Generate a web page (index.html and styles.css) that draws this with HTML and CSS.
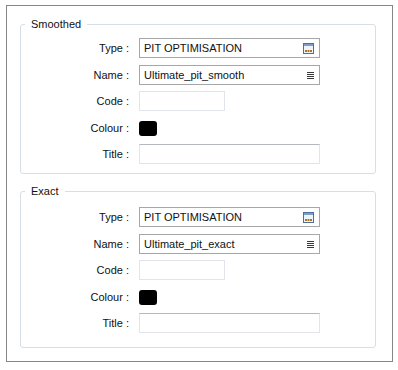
FILE: index.html
```html
<!DOCTYPE html>
<html lang="en">
  <head>
    <meta charset="UTF-8" />
    <title>Pit Outlines</title>
    <link rel="stylesheet" href="styles.css">
  </head>
  <body>
    <div class="panel">
      <div class="group group-first">
        <span class="group-title">Smoothed</span>
        <div class="form-grid">
          <label class="field-label">Type :</label>
          <div class="field field-wide field-dark">
            <span class="field-text">PIT OPTIMISATION</span>
            <svg class="icon-browse" width="11" height="11" viewBox="0 0 11 11">
              <rect x="0.5" y="0.5" width="10" height="10" fill="#eef4fb" stroke="#4d6f9c" />
              <rect x="1" y="1" width="9" height="2" fill="#7f9ec6" />
              <rect x="2" y="7" width="2" height="2" fill="#b5731d" />
              <rect x="4.5" y="7" width="2" height="2" fill="#b5731d" />
              <rect x="7" y="7" width="2" height="2" fill="#b5731d" />
            </svg>
          </div>

          <label class="field-label">Name :</label>
          <div class="field field-wide field-dark">
            <span class="field-text">Ultimate_pit_smooth</span>
            <svg class="icon-list" width="7" height="7" viewBox="0 0 7 7">
              <rect x="0" y="0" width="7" height="1" fill="#3a3a3a" />
              <rect x="0" y="2" width="7" height="1" fill="#3a3a3a" />
              <rect x="0" y="4" width="7" height="1" fill="#3a3a3a" />
              <rect x="0" y="6" width="7" height="1" fill="#3a3a3a" />
            </svg>
          </div>

          <label class="field-label">Code :</label>
          <div class="field field-short field-light"></div>

          <label class="field-label">Colour :</label>
          <div class="swatch-cell"><span class="swatch"></span></div>

          <label class="field-label">Title :</label>
          <div class="field field-wide field-light field-title"></div>
        </div>
      </div>

      <div class="group group-second">
        <span class="group-title">Exact</span>
        <div class="form-grid">
          <label class="field-label">Type :</label>
          <div class="field field-wide field-dark">
            <span class="field-text">PIT OPTIMISATION</span>
            <svg class="icon-browse" width="11" height="11" viewBox="0 0 11 11">
              <rect x="0.5" y="0.5" width="10" height="10" fill="#eef4fb" stroke="#4d6f9c" />
              <rect x="1" y="1" width="9" height="2" fill="#7f9ec6" />
              <rect x="2" y="7" width="2" height="2" fill="#b5731d" />
              <rect x="4.5" y="7" width="2" height="2" fill="#b5731d" />
              <rect x="7" y="7" width="2" height="2" fill="#b5731d" />
            </svg>
          </div>

          <label class="field-label">Name :</label>
          <div class="field field-wide field-dark">
            <span class="field-text">Ultimate_pit_exact</span>
            <svg class="icon-list" width="7" height="7" viewBox="0 0 7 7">
              <rect x="0" y="0" width="7" height="1" fill="#3a3a3a" />
              <rect x="0" y="2" width="7" height="1" fill="#3a3a3a" />
              <rect x="0" y="4" width="7" height="1" fill="#3a3a3a" />
              <rect x="0" y="6" width="7" height="1" fill="#3a3a3a" />
            </svg>
          </div>

          <label class="field-label">Code :</label>
          <div class="field field-short field-light"></div>

          <label class="field-label">Colour :</label>
          <div class="swatch-cell"><span class="swatch"></span></div>

          <label class="field-label">Title :</label>
          <div class="field field-wide field-light field-title"></div>
        </div>
      </div>
    </div>
  </body>
</html>
```

FILE: styles.css
```css
:root {
  --panel-border: #868686;
  --group-border: #d5dfe5;
  --field-dark: #a7a7a7;
  --field-light: #e1e4ea;
  --text: #111111;
}

* {
  margin: 0;
  padding: 0;
  box-sizing: border-box;
}

body {
  font-family: "Liberation Sans", Arial, sans-serif;
  font-size: 11px;
  color: var(--text);
  background: #ffffff;
}

.panel {
  margin: 5px 0 0 6px;
  width: 387px;
  height: 357px;
  border: 1px solid var(--panel-border);
  padding: 18px 16px 0 13px;
}

.group {
  position: relative;
  border: 1px solid var(--group-border);
  border-radius: 3px;
}

.group-first {
  padding: 13px 0 9px 0;
}

.group-second {
  margin-top: 17px;
  padding: 15px 0 14px 0;
}

.group-title {
  position: absolute;
  top: -8px;
  left: 4px;
  padding: 0 6px;
  line-height: 14px;
  background: #ffffff;
}

.form-grid {
  display: grid;
  grid-template-columns: 118px 1fr;
  grid-auto-rows: 20px;
  row-gap: 6.5px;
}

.field-label {
  display: flex;
  align-items: center;
  justify-content: flex-end;
  padding-right: 10px;
}

.field {
  display: flex;
  align-items: center;
  height: 20px;
  padding: 0 5px 0 4px;
  border: 1px solid var(--field-dark);
}

.field-wide {
  width: 181px;
}

.field-short {
  width: 86px;
}

.field-light {
  border-color: var(--field-light);
}

.field-title {
  border-top-color: #b4b7bd;
}

.field-text {
  flex: 1;
  white-space: nowrap;
}

.icon-browse {
  display: block;
  margin-top: 1px;
}

.icon-list {
  display: block;
  margin-top: 1px;
}

.swatch-cell {
  display: flex;
  align-items: center;
}

.swatch {
  display: block;
  width: 18px;
  height: 15px;
  margin-top: 2px;
  background: #000000;
  border-radius: 3px;
}
```
